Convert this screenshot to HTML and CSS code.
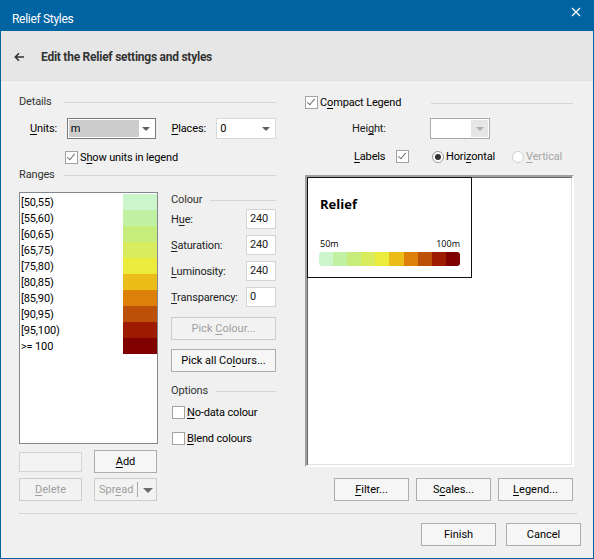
FILE: index.html
```html
<!DOCTYPE html>
<html>
    <head>
        <link rel="stylesheet" href="styles.css">
    </head>
    <body>
        <div class="window">
            <div class="titlebar">
                <span class="title">Relief Styles</span>
                <svg class="close" width="10" height="10" viewBox="0 0 10 10">
                    <path d="M1 1 L9 9 M9 1 L1 9" stroke="#fff" stroke-width="1.3" fill="none"/>
                </svg>
            </div>
            <div class="header">
                <svg class="back" width="11" height="10" viewBox="0 0 11 10">
                    <path d="M10 5 H1.5 M5 1.2 L1.3 5 L5 8.8" stroke="#333" stroke-width="1.6" fill="none"/>
                </svg>
                <span class="header-text">Edit the Relief settings and styles</span>
            </div>

            <div class="main">
                <div class="left">
                    <div class="group-head details"><span>Details</span></div>
                    <div class="units-row">
                        <label class="units-label"><u>U</u>nits:</label>
                        <div class="combo units-combo">
                            <span class="selected">m</span>
                            <span class="arrow"></span>
                        </div>
                        <label class="places-label"><u>P</u>laces:</label>
                        <div class="combo places-combo">
                            <span class="value">0</span>
                            <span class="arrow"></span>
                        </div>
                    </div>
                    <div class="check-row show-units">
                        <span class="check on"></span>
                        <span>S<u>h</u>ow units in legend</span>
                    </div>
                    <div class="group-head ranges"><span>Ranges</span></div>

                    <div class="ranges-body">
                        <div class="listbox">
                            <div class="item"><span>[50,55)</span><i style="background:#ccf5cc"></i></div>
                            <div class="item"><span>[55,60)</span><i style="background:#c1f1a3"></i></div>
                            <div class="item"><span>[60,65)</span><i style="background:#c6ec7c"></i></div>
                            <div class="item"><span>[65,75)</span><i style="background:#d8ec5e"></i></div>
                            <div class="item"><span>[75,80)</span><i style="background:#ecec3c"></i></div>
                            <div class="item"><span>[80,85)</span><i style="background:#ecbc18"></i></div>
                            <div class="item"><span>[85,90)</span><i style="background:#dc800a"></i></div>
                            <div class="item"><span>[90,95)</span><i style="background:#bc5006"></i></div>
                            <div class="item"><span>[95,100)</span><i style="background:#9e1a00"></i></div>
                            <div class="item"><span>&gt;= 100</span><i style="background:#800000"></i></div>
                        </div>

                        <div class="colour-panel">
                            <div class="group-head colour"><span>Colour</span></div>
                            <div class="field first"><label>H<u>u</u>e:</label><div class="textbox">240</div></div>
                            <div class="field"><label><u>S</u>aturation:</label><div class="textbox">240</div></div>
                            <div class="field"><label><u>L</u>uminosity:</label><div class="textbox">240</div></div>
                            <div class="field"><label><u>T</u>ransparency:</label><div class="textbox">0</div></div>
                            <button class="btn wide pick" disabled>Pick <u>C</u>olour...</button>
                            <button class="btn wide pick-all">Pick all Co<u>l</u>ours...</button>
                            <div class="group-head options"><span>Options</span></div>
                            <div class="check-row nodata">
                                <span class="check"></span>
                                <span><u>N</u>o-data colour</span>
                            </div>
                            <div class="check-row blend">
                                <span class="check"></span>
                                <span><u>B</u>lend colours</span>
                            </div>
                        </div>
                    </div>

                    <div class="btn-row add-row">
                        <div class="textbox disabled small"></div>
                        <button class="btn small"><u>A</u>dd</button>
                    </div>
                    <div class="btn-row spread-row">
                        <button class="btn small" disabled><u>D</u>elete</button>
                        <button class="btn small split" disabled>
                            <span class="split-text">Spr<u>e</u>ad</span>
                            <span class="split-arrow"></span>
                        </button>
                    </div>
                </div>

                <div class="right">
                    <div class="group-head compact">
                        <span class="check on"></span>
                        <span class="compact-text">C<u>o</u>mpact Legend</span>
                    </div>
                    <div class="height-row">
                        <label class="height-label">Hei<u>g</u>ht:</label>
                        <div class="combo height-combo">
                            <span class="value"></span>
                            <span class="arrow-box"><span class="arrow"></span></span>
                        </div>
                    </div>
                    <div class="labels-row">
                        <label class="labels-label"><u>L</u>abels</label>
                        <span class="check on"></span>
                        <span class="radio-item horizontal">
                            <span class="radio on"></span>
                            <span>Hori<u>z</u>ontal</span>
                        </span>
                        <span class="radio-item vertical">
                            <span class="radio"></span>
                            <span><u>V</u>ertical</span>
                        </span>
                    </div>

                    <div class="preview">
                        <div class="legend">
                            <div class="legend-title">Relief</div>
                            <div class="legend-labels"><span>50m</span><span>100m</span></div>
                            <div class="legend-bar">
                                <i style="background:#ccf5cc"></i>
                                <i style="background:#c1f1a3"></i>
                                <i style="background:#c6ec7c"></i>
                                <i style="background:#d8ec5e"></i>
                                <i style="background:#ecec3c"></i>
                                <i style="background:#ecbc18"></i>
                                <i style="background:#dc800a"></i>
                                <i style="background:#bc5006"></i>
                                <i style="background:#9e1a00"></i>
                                <i style="background:#800000"></i>
                            </div>
                        </div>
                    </div>

                    <div class="btn-row preview-buttons">
                        <button class="btn"><u>F</u>ilter...</button>
                        <button class="btn">S<u>c</u>ales...</button>
                        <button class="btn"><u>L</u>egend...</button>
                    </div>
                </div>
            </div>

            <div class="separator"></div>
            <div class="footer">
                <button class="btn">Finish</button>
                <button class="btn">Cancel</button>
            </div>
        </div>
    </body>
</html>
```

FILE: styles.css
```css
* {
    box-sizing: border-box;
}

body {
    margin: 0;
    background: #f0f0f0;
    font-family: Roboto, 'Liberation Sans', Arial, sans-serif;
    font-size: 11px;
    letter-spacing: -0.15px;
    color: #000;
}

u {
    text-decoration-thickness: 1px;
    text-underline-offset: 2px;
}

.window {
    width: 594px;
    height: 559px;
    border: 1px solid #0063a2;
    border-top: none;
    background: #f0f0f0;
}

.titlebar {
    height: 31px;
    margin: 0 -1px;
    background: #0063a2;
    display: flex;
    align-items: flex-start;
    justify-content: space-between;
    padding: 0 13px 0 12px;
    color: #fff;
}

.title {
    font-size: 12px;
    letter-spacing: -0.3px;
    line-height: 14px;
    margin-top: 12px;
}

.close {
    margin-top: 7px;
}

.header {
    height: 52px;
    background: #e6e6e6;
    border-bottom: 1px solid #f9f9f9;
    display: flex;
    align-items: center;
    padding: 1px 0 0 13px;
}

.header-text {
    margin-left: 16px;
    font-size: 12px;
    letter-spacing: -0.25px;
    font-weight: bold;
    color: #333;
}

.main {
    display: flex;
    padding: 10px 0 0 18px;
}

.left {
    width: 257px;
}

.right {
    width: 269px;
    margin-left: 29px;
}

/* group headings with a line after them */
.group-head {
    height: 16px;
    display: flex;
    align-items: center;
    color: #333;
}

.group-head::after {
    content: '';
    flex: 1;
    height: 1px;
    margin-top: 3px;
    background: #d5d5d5;
}

.details span,
.ranges span {
    width: 45px;
}

.ranges {
    margin-top: 2px;
}

.colour span {
    width: 39px;
}

.options {
    margin-top: 10px;
}

.options span {
    width: 45px;
}

.compact {
    margin-top: 1px;
    color: #000;
}

.compact .check {
    margin: 0 2px 0 0;
}

.compact-text {
    width: 111px;
}

.compact::after {
    margin-right: 1px;
}

/* combo boxes */
.units-row,
.height-row {
    height: 21px;
    display: flex;
    align-items: center;
}

.units-row {
    margin-top: 9px;
}

.units-label {
    margin-left: 11px;
    width: 37px;
}

.places-label {
    margin-left: 15px;
    width: 45px;
}

.combo {
    height: 21px;
    display: flex;
    align-items: center;
    background: #fff;
    border: 1px solid #d9d9d9;
}

.units-combo {
    width: 90px;
    border-color: #7a7a7a;
    padding: 1px;
}

.units-combo .selected {
    width: 70px;
    height: 17px;
    background: #ccc;
    padding-left: 2px;
    line-height: 17px;
}

.places-combo {
    width: 60px;
    padding-left: 3px;
}

.combo .value {
    flex: 1;
}

.arrow {
    width: 0;
    height: 0;
    border-left: 4px solid transparent;
    border-right: 4px solid transparent;
    border-top: 4px solid #606060;
    margin: 1px 5px 0 auto;
}

.units-combo .arrow {
    margin-right: 4px;
}

.height-row {
    margin-top: 8px;
}

.height-label {
    margin-left: 47px;
    width: 78px;
    color: #222;
}

.height-combo {
    width: 60px;
    border-color: #a8a8a8;
    padding: 1px;
}

.arrow-box {
    width: 17px;
    height: 17px;
    background: #e6e6e6;
    display: flex;
    align-items: center;
}

.arrow-box .arrow {
    border-top-color: #b0b0b0;
    margin: 1px auto 0 auto;
}

/* checkboxes and radios */
.check-row {
    height: 13px;
    display: flex;
    align-items: center;
}

.check {
    width: 13px;
    height: 13px;
    border: 1px solid #a2a2a2;
    background: #fff;
    margin-right: 2px;
    flex: none;
    position: relative;
}

.check.on::after {
    content: '';
    position: absolute;
    left: 3px;
    top: 0px;
    width: 3px;
    height: 7px;
    border-right: 1px solid #6e6e6e;
    border-bottom: 1px solid #6e6e6e;
    transform: rotate(40deg);
}

.show-units {
    margin: 12px 0 0 46px;
}

.labels-row {
    height: 13px;
    margin-top: 11px;
    display: flex;
    align-items: center;
}

.labels-label {
    margin-left: 49px;
    width: 42px;
}

.radio-item {
    display: flex;
    align-items: center;
    gap: 2px;
}

.horizontal {
    margin-left: 21px;
    width: 80px;
}

.vertical {
    color: #a6a6a6;
}

.radio {
    width: 12px;
    height: 12px;
    border: 1px solid #999;
    border-radius: 50%;
    background: #fff;
    position: relative;
}

.vertical .radio {
    border-color: #cfcfcf;
}

.radio.on::after {
    content: '';
    position: absolute;
    left: 2px;
    top: 2px;
    width: 6px;
    height: 6px;
    border-radius: 50%;
    background: #333;
}

/* ranges list */
.ranges-body {
    display: flex;
    height: 252px;
    margin-top: 10px;
}

.listbox {
    width: 139px;
    height: 252px;
    background: #fff;
    border: 1px solid #828790;
    padding: 1px 0 0 1px;
}

.item {
    height: 16px;
    display: flex;
    align-items: center;
}

.item span {
    flex: 1;
}

.item i {
    width: 34px;
    height: 16px;
}

.colour-panel {
    width: 105px;
    height: 252px;
    margin: -1px 0 0 13px;
}

.field {
    height: 20px;
    margin-top: 6px;
    display: flex;
    align-items: center;
    color: #222;
}

.field.first {
    margin-top: 2px;
}

.field label {
    width: 75px;
}

.textbox {
    width: 30px;
    height: 20px;
    background: #fff;
    border: 1px solid #d4d4d4;
    padding: 2px 0 0 3px;
}

.textbox.small {
    width: 63px;
}

.textbox.disabled {
    background: #f3f3f3;
}

/* buttons */
.btn {
    font: inherit;
    color: #000;
    height: 23px;
    width: 75px;
    padding: 0;
    background: #f6f6f6;
    border: 1px solid #adadad;
}

.btn:disabled {
    color: #a0a0a0;
    border-color: #cccccc;
    background: #f2f2f2;
}

.btn.wide {
    width: 105px;
    display: block;
}

.pick {
    margin-top: 10px;
}

.pick-all {
    margin-top: 9px;
}

.nodata {
    margin: 8px 0 0 1px;
}

.blend {
    margin: 13px 0 0 1px;
}

.btn-row {
    display: flex;
    align-items: center;
}

.btn.small {
    width: 63px;
}

.add-row {
    margin-top: 6px;
    gap: 12px;
}

.spread-row {
    margin-top: 5px;
    gap: 12px;
}

.split {
    display: flex;
    align-items: center;
    padding-left: 4px;
}

.split-text {
    padding-right: 4px;
    border-right: 1px solid #a8a8a8;
    line-height: 15px;
}

.split-arrow {
    width: 0;
    height: 0;
    border-left: 5px solid transparent;
    border-right: 5px solid transparent;
    border-top: 5px solid #6d6d6d;
    margin: 1px 0 0 5px;
}

/* legend preview */
.preview {
    height: 292px;
    margin-top: 12px;
    background: #fff;
    border: 2px solid;
    border-color: #a0a0a0 #fff #fff #a0a0a0;
    box-shadow: inset 1px 1px 0 #6a6a6a, inset -1px -1px 0 #e3e3e3;
}

.legend {
    width: 165px;
    height: 101px;
    border: 1px solid #111;
    padding: 16px 11px 0 12px;
}

.legend-title {
    font-family: 'Open Sans', sans-serif;
    font-weight: bold;
    font-size: 13px;
    letter-spacing: 0;
    line-height: 20px;
}

.legend-labels {
    display: flex;
    justify-content: space-between;
    font-family: 'Open Sans', sans-serif;
    font-size: 9px;
    letter-spacing: 0;
    line-height: 12px;
    margin-top: 24px;
}

.legend-bar {
    display: flex;
    width: 141px;
    height: 14px;
    margin: 2px 0 0 -1px;
    border-radius: 3px;
    overflow: hidden;
    filter: blur(0.4px);
}

.legend-bar i {
    flex: 1;
}

.preview-buttons {
    margin-top: 11px;
    justify-content: flex-end;
    gap: 7px;
    padding-right: 1px;
}

.separator {
    height: 1px;
    background: #d3d3d3;
    margin: 12px 16px 0 18px;
}

.footer {
    display: flex;
    justify-content: flex-end;
    gap: 10px;
    padding: 9px 12px 0 0;
}
```
